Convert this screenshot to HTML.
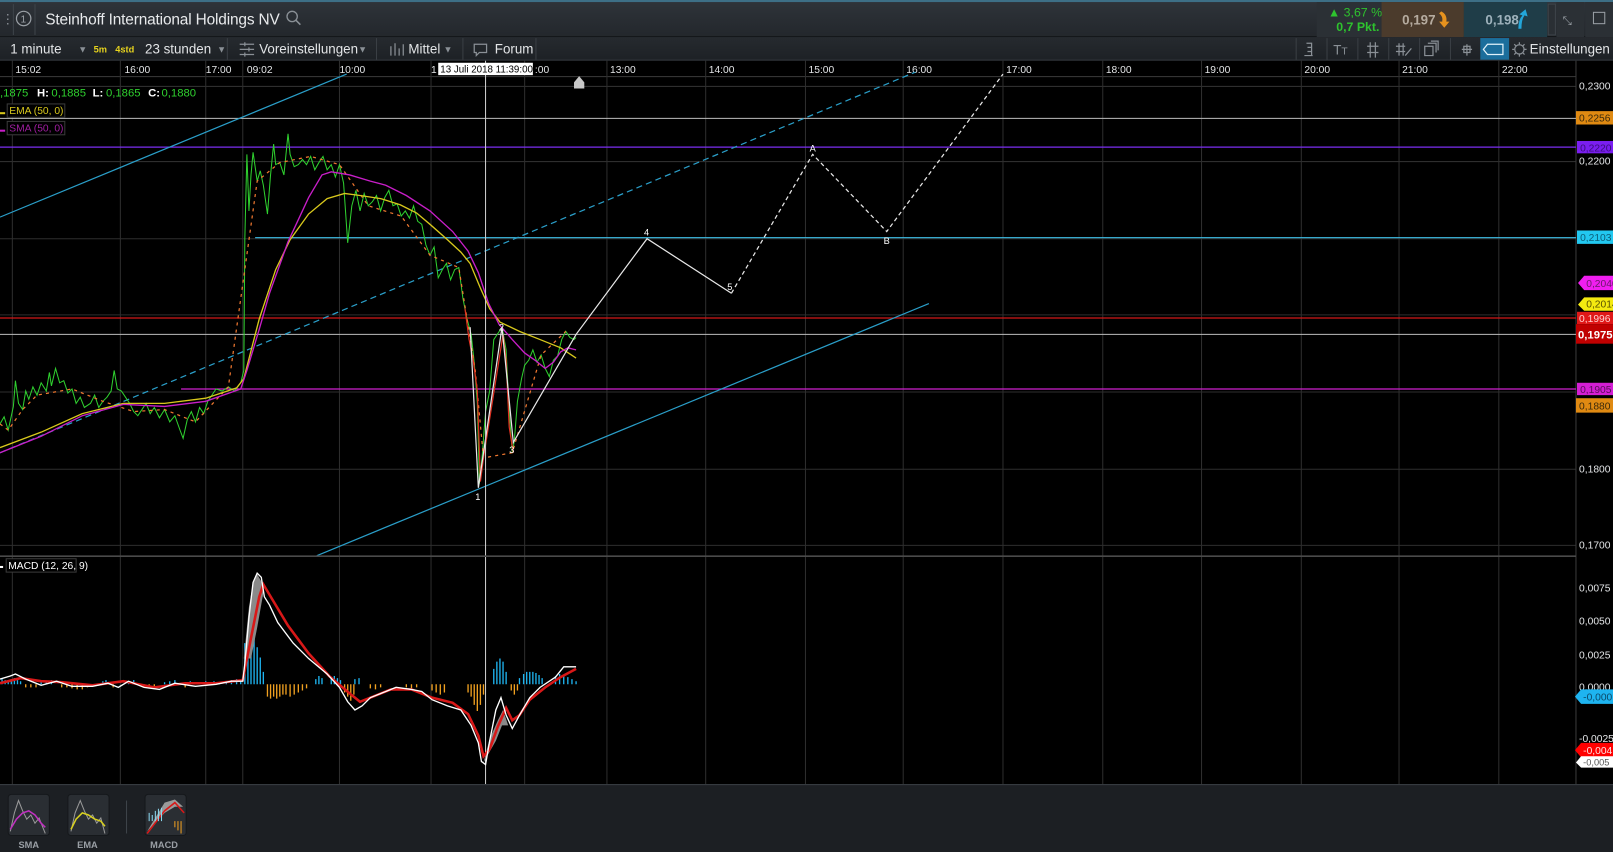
<!DOCTYPE html>
<html><head><meta charset="utf-8"><style>
html,body{margin:0;padding:0;background:#000;overflow:hidden}
svg{display:block}
text{font-family:"Liberation Sans",sans-serif}
</style></head><body>
<svg width="1613" height="852" viewBox="0 0 1568 828" preserveAspectRatio="none" xmlns="http://www.w3.org/2000/svg">
<defs>
<linearGradient id="tb" x1="0" y1="0" x2="0" y2="1"><stop offset="0" stop-color="#2f343a"/><stop offset="1" stop-color="#23272c"/></linearGradient>
<linearGradient id="tb2" x1="0" y1="0" x2="0" y2="1"><stop offset="0" stop-color="#262a2f"/><stop offset="1" stop-color="#1d2125"/></linearGradient>
</defs>
<rect width="1568" height="828" fill="#000"/>
<!-- top bar -->
<rect x="0" y="0" width="1568" height="36" fill="url(#tb)"/>
<rect x="0" y="0" width="1568" height="2" fill="#3d6f86"/>
<rect x="0" y="35" width="1568" height="1" fill="#14171a"/>
<text x="1" y="23" fill="#8a9096" font-size="13">⋮</text>
<line x1="13" y1="4" x2="13" y2="34" stroke="#3e444a"/>
<circle cx="23" cy="18" r="7" fill="none" stroke="#9aa0a6" stroke-width="1.2"/>
<text x="20" y="22" fill="#9aa0a6" font-size="10">1</text>
<line x1="34" y1="4" x2="34" y2="34" stroke="#3e444a"/>
<text x="44" y="24" fill="#e8eaec" font-size="15" textLength="228">Steinhoff International Holdings NV</text>
<circle cx="284" cy="16" r="5" fill="none" stroke="#8a9096" stroke-width="1.3"/><line x1="287.5" y1="19.5" x2="292" y2="24" stroke="#8a9096" stroke-width="1.5"/>
<rect x="1280" y="2" width="63" height="34" fill="#2b3035"/>
<text x="1291" y="16" fill="#2ec32e" font-size="12">▲ 3,67 %</text>
<text x="1299" y="30" fill="#2ec32e" font-size="12" font-weight="bold">0,7 Pkt.</text>
<rect x="1343" y="2" width="80" height="34" fill="#4b3b2c"/>
<text x="1363" y="24" fill="#b5ab9f" font-size="13" font-weight="bold">0,197</text>
<path d="M1401 11 q6 3 5 10 l3 0 l-5 6 l-5-6 l3 0 q1-5-3-8z" fill="#e6921e"/>
<rect x="1423" y="2" width="81" height="34" fill="#1f3d48"/>
<text x="1444" y="24" fill="#9db1bb" font-size="13" font-weight="bold">0,198</text>
<path d="M1476 28 q0-9 4-13 l-3-1 l6-5 l2 7 l-3-1 q-3 4-3 13z" fill="#23a6d9"/>
<rect x="1505" y="4" width="7" height="30" fill="#2a2f34" stroke="#3e444a"/>
<rect x="1513" y="2" width="27" height="34" fill="#2b3035"/>
<text x="1519" y="24" fill="#9aa0a6" font-size="11">⤡</text>
<rect x="1541" y="2" width="27" height="34" fill="#2b3035"/>
<rect x="1549" y="12" width="11" height="11" fill="none" stroke="#9aa0a6"/>
<!-- toolbar -->
<rect x="0" y="36" width="1568" height="23" fill="url(#tb2)"/>
<rect x="0" y="58" width="1568" height="1" fill="#3a3f44"/>
<g font-size="13" fill="#e3e5e7">
<text x="10" y="52">1 minute</text>
<text x="76" y="51" fill="#8a9096" font-size="9">▼</text>
<text x="91" y="51" fill="#e6d21e" font-size="9" font-weight="bold">5m</text>
<text x="112" y="51" fill="#e6d21e" font-size="9" font-weight="bold">4std</text>
<text x="141" y="52">23 stunden</text>
<text x="211" y="51" fill="#8a9096" font-size="9">▼</text>
<text x="252" y="52">Voreinstellungen</text>
<text x="348" y="51" fill="#8a9096" font-size="9">▼</text>
<text x="397" y="52">Mittel</text>
<text x="431" y="51" fill="#8a9096" font-size="9">▼</text>
<text x="481" y="52">Forum</text>
<text x="1487" y="52">Einstellungen</text>
</g>
<g stroke="#3a3f44"><line x1="221" y1="37" x2="221" y2="58"/><line x1="366" y1="37" x2="366" y2="58"/><line x1="450" y1="37" x2="450" y2="58"/><line x1="521" y1="37" x2="521" y2="58"/>
<line x1="1260" y1="37" x2="1260" y2="58"/><line x1="1290" y1="37" x2="1290" y2="58"/><line x1="1320" y1="37" x2="1320" y2="58"/><line x1="1350" y1="37" x2="1350" y2="58"/><line x1="1380" y1="37" x2="1380" y2="58"/><line x1="1410" y1="37" x2="1410" y2="58"/></g>
<g stroke="#8a9096" fill="none" stroke-width="1.2">
<path d="M233 43h14M233 48h14M233 53h14M238 41v4M242 46v4M238 51v4"/>
<path d="M380 45v9M384 42v12M388 47v7M392 43v11"/>
<path d="M461 43h12v8h-7l-3 3v-3h-2z"/>
<path d="M1270 42h5v12M1268 54h8M1271 46h4M1271 50h4"/>
<path d="M1332 41v15M1337 41v15M1329 45h11M1329 51h11"/>
<path d="M1360 42v12M1364 42v12M1357 45h9M1357 50h9M1366 54l6-7"/>
<path d="M1385 45h8v9h-8zM1388 42h8v9M1391 40h7v9"/>
<path d="M1421 48h10M1426 43v11"/><rect x="1423" y="45" width="6" height="6"/>
<circle cx="1477" cy="48" r="4.5"/><path d="M1477 41v2M1477 53v2M1470 48h2M1482 48h2M1472 43l1.5 1.5M1482 53l-1.5-1.5M1482 43l-1.5 1.5M1472 53l1.5-1.5"/>
</g>
<text x="1296" y="53" fill="#8a9096" font-size="13">T<tspan font-size="10">T</tspan></text>
<rect x="1439" y="37" width="28" height="21" fill="#1b6e9c"/>
<path d="M1446 43h15v10h-15l-4-5z" fill="none" stroke="#e0f2fa" stroke-width="1.2"/>
<!-- time axis -->
<rect x="0" y="59" width="1568" height="15" fill="#000"/>
<line x1="0" y1="74.5" x2="1532" y2="74.5" stroke="#3b3b3b"/>
<g stroke="#2e2e2e" stroke-width="1">
<line x1="12" y1="59" x2="12" y2="762"/><line x1="117" y1="59" x2="117" y2="762"/><line x1="200" y1="59" x2="200" y2="762"/><line x1="236" y1="59" x2="236" y2="762"/><line x1="330" y1="59" x2="330" y2="762"/><line x1="419" y1="59" x2="419" y2="762"/><line x1="510" y1="59" x2="510" y2="762"/><line x1="590" y1="59" x2="590" y2="762"/><line x1="686" y1="59" x2="686" y2="762"/><line x1="783" y1="59" x2="783" y2="762"/><line x1="878" y1="59" x2="878" y2="762"/><line x1="975" y1="59" x2="975" y2="762"/><line x1="1072" y1="59" x2="1072" y2="762"/><line x1="1168" y1="59" x2="1168" y2="762"/><line x1="1265" y1="59" x2="1265" y2="762"/><line x1="1360" y1="59" x2="1360" y2="762"/><line x1="1457" y1="59" x2="1457" y2="762"/>
<line x1="0" y1="84" x2="1532" y2="84"/><line x1="0" y1="157" x2="1532" y2="157"/><line x1="0" y1="232" x2="1532" y2="232"/><line x1="0" y1="306" x2="1532" y2="306"/><line x1="0" y1="381" x2="1532" y2="381"/><line x1="0" y1="456" x2="1532" y2="456"/><line x1="0" y1="530" x2="1532" y2="530"/>
</g>
<line x1="1532" y1="59" x2="1532" y2="762" stroke="#3a3a3a"/>
<g fill="#e3e5e7" font-size="10">
<text x="15" y="71">15:02</text><text x="121" y="71">16:00</text><text x="200" y="71">17:00</text><text x="240" y="71">09:02</text><text x="330" y="71">10:00</text><text x="419" y="71">1</text><text x="520" y="71">:00</text><text x="593" y="71">13:00</text><text x="689" y="71">14:00</text><text x="786" y="71">15:00</text><text x="881" y="71">16:00</text><text x="978" y="71">17:00</text><text x="1075" y="71">18:00</text><text x="1171" y="71">19:00</text><text x="1268" y="71">20:00</text><text x="1363" y="71">21:00</text><text x="1460" y="71">22:00</text>
</g>
<!-- price axis labels -->
<g fill="#e3e5e7" font-size="10">
<text x="1535" y="87">0,2300</text><text x="1535" y="160">0,2200</text><text x="1535" y="459">0,1800</text><text x="1535" y="533">0,1700</text>
</g>
<rect x="1532" y="108" width="36" height="13" fill="#e08a12"/><text x="1535" y="118" fill="#3a2a0c" font-size="10">0,2256</text>
<rect x="1533" y="137" width="35" height="12" fill="#7a1ef0"/><text x="1536" y="147" fill="#3a0d7a" font-size="10">0,2220</text>
<rect x="1533" y="224" width="35" height="13" fill="#22c8f0"/><text x="1536" y="234" fill="#0c5f7a" font-size="10">0,2103</text>
<path d="M1540 268h28v14h-28l-6-7z" fill="#f01ef0"/><text x="1542" y="279" fill="#6a1a6a" font-size="10">0,2040</text>
<path d="M1540 289h28v13h-28l-6-6z" fill="#f4ea10"/><text x="1542" y="299" fill="#5a5200" font-size="10">0,2014</text>
<rect x="1533" y="303" width="35" height="12" fill="#e01818"/><text x="1535" y="313" fill="#ffd0d0" font-size="10">0,1996</text>
<rect x="1532" y="315" width="36" height="19" fill="#c00000"/><text x="1534" y="329" fill="#fff" font-size="11" font-weight="bold">0,1975</text>
<rect x="1533" y="372" width="35" height="12" fill="#d41ed4"/><text x="1536" y="382" fill="#5a0d5a" font-size="10">0,1905</text>
<rect x="1532" y="387" width="36" height="14" fill="#e08a12"/><text x="1535" y="398" fill="#3a2a0c" font-size="10">0,1880</text>
<!-- horizontal level lines -->
<line x1="0" y1="115" x2="1532" y2="115" stroke="#bdbdbd"/>
<line x1="0" y1="143" x2="1532" y2="143" stroke="#7a2ef0" stroke-width="1.2"/>
<line x1="248" y1="231" x2="1532" y2="231" stroke="#3ec0e8"/>
<line x1="0" y1="309" x2="1532" y2="309" stroke="#d01818" stroke-width="1.2"/>
<line x1="0" y1="325" x2="1532" y2="325" stroke="#bdbdbd"/>
<line x1="176" y1="378" x2="1532" y2="378" stroke="#d020d0" stroke-width="1.2"/>
<!-- trend lines -->
<line x1="0" y1="211" x2="337" y2="72" stroke="#2a9ec8" stroke-width="1.2"/>
<line x1="0" y1="440" x2="890" y2="70" stroke="#2a9ec8" stroke-width="1.2" stroke-dasharray="6,4"/>
<line x1="308" y1="540" x2="903" y2="295" stroke="#2a9ec8" stroke-width="1.2"/>
<!-- price bars -->
<polyline fill="none" stroke="#2fd02f" stroke-width="1" points="0,412 4,405 8,418 13,395 15,370 18,392 22,398 25,380 28,388 32,376 36,384 40,372 45,380 48,362 50,375 54,358 58,372 62,370 66,382 70,378 74,392 78,386 82,396 88,392 92,384 96,396 100,390 104,386 108,380 111,360 114,378 118,380 122,386 126,392 130,400 134,404 138,398 142,392 146,402 150,396 155,406 160,398 165,410 170,404 175,418 178,426 182,408 186,400 190,410 194,396 198,402 202,390 206,384 210,378 216,380 222,376 228,380 234,372 237,360 238,232 240,150 242,205 244,170 246,148 250,176 253,166 256,180 260,208 263,170 266,140 268,160 272,158 276,170 280,130 282,150 286,162 290,160 294,155 298,160 302,152 306,165 310,158 314,152 318,165 322,160 326,172 330,160 334,178 338,236 342,200 346,185 350,205 354,188 358,200 362,196 366,190 370,205 374,192 378,185 382,200 386,198 390,210 394,205 398,212 402,200 406,215 410,218 414,238 418,248 422,240 426,270 430,262 434,256 438,272 442,262 446,260 450,290 454,310 458,325 461,352 464,392 466,470 469,440 472,400 476,380 480,330 484,324 488,318 492,340 495,400 498,440 500,428 503,390 507,368 510,355 514,350 518,340 522,352 526,345 530,358 534,366 538,350 542,346 546,330 550,322 554,328 558,330 560,328"/>
<polyline fill="none" stroke="#f07830" stroke-width="1.2" stroke-dasharray="3,4" points="0,412 8,418 22,398 36,384 70,378 100,390 130,400 160,398 190,410 222,376 250,176 272,158 302,152 330,160 358,200 390,210 418,248 446,260 462,360 470,445 498,440 526,345 550,322"/>
<polyline fill="none" stroke="#e03020" stroke-width="1.2" points="452,300 456,330 460,350 464,380 467,468 470,445 489,325 492,350 495,415 499,440"/>
<!-- EMA / SMA -->
<polyline fill="none" stroke="#d8c81c" stroke-width="1.3" points="0,435 40,420 80,402 120,392 160,392 200,387 230,377 237,368 252,310 268,262 282,233 300,208 318,193 335,188 350,190 370,193 389,199 405,207 418,218 435,233 448,245 457,256 467,280 476,300 486,313 505,322 525,330 545,338 560,348"/>
<polyline fill="none" stroke="#c81ec8" stroke-width="1.3" points="0,440 40,424 80,404 120,393 160,395 200,390 234,378 240,360 252,320 262,285 280,235 300,192 313,170 322,167 340,170 360,176 375,180 395,190 418,205 440,225 455,244 465,265 475,295 485,315 498,330 510,343 520,350 530,358 538,352 545,342 552,338 560,340"/>
<!-- wave lines -->
<polyline fill="none" stroke="#e8e8e8" stroke-width="1.2" points="457,318 465,474 488,318 499,430 560,325 629,232 711,285"/>
<polyline fill="none" stroke="#e8e8e8" stroke-width="1.2" stroke-dasharray="4,3" points="711,285 790,150 862,225 975,72"/>
<g fill="#fff" font-size="9">
<text x="462" y="486">1</text><text x="485" y="321">2</text><text x="495" y="440">3</text><text x="626" y="229">4</text><text x="707" y="282">5</text><text x="787" y="147">A</text><text x="859" y="237">B</text>
</g>
<!-- legend -->
<g font-size="11">
<text x="0" y="94" fill="#2fd02f">,1875</text><text x="36" y="94" fill="#fff" font-weight="bold">H:</text><text x="50" y="94" fill="#2fd02f">0,1885</text>
<text x="90" y="94" fill="#fff" font-weight="bold">L:</text><text x="103" y="94" fill="#2fd02f">0,1865</text>
<text x="144" y="94" fill="#fff" font-weight="bold">C:</text><text x="157" y="94" fill="#2fd02f">0,1880</text>
</g>
<rect x="0" y="109" width="5" height="2" fill="#d8c81c"/>
<rect x="7" y="101" width="56" height="13" fill="#000" stroke="#3a3a3a"/><text x="9" y="111" fill="#d8c81c" font-size="10">EMA (50, 0)</text>
<rect x="0" y="126" width="5" height="2" fill="#c81ec8"/>
<rect x="7" y="118" width="56" height="13" fill="#000" stroke="#3a3a3a"/><text x="9" y="128" fill="#a01ea0" font-size="10">SMA (50, 0)</text>
<!-- crosshair -->
<line x1="472" y1="59" x2="472" y2="762" stroke="#cfcfcf"/>
<rect x="426" y="61" width="92" height="12" fill="#fff"/><text x="428" y="70.5" fill="#000" font-size="9.5">13 Juli 2018 11:39:00</text>
<path d="M558 80l5-6 5 6v6h-10z" fill="#c8c8c8"/>
<!-- pane separator -->
<line x1="0" y1="540.5" x2="1532" y2="540.5" stroke="#4a4a4a" stroke-width="1.5"/>
<!-- MACD axis -->
<g fill="#e3e5e7" font-size="10">
<text x="1535" y="575">0,0075</text><text x="1535" y="607">0,0050</text><text x="1535" y="640">0,0025</text><text x="1535" y="671">0,0000</text><text x="1535" y="721">-0,0025</text>
</g>
<path d="M1537 670h31v14h-31l-6-7z" fill="#1eb4f0"/><text x="1539" y="681" fill="#0c4a6a" font-size="10">-0,000</text>
<path d="M1537 722h31v14h-31l-6-7z" fill="#f00"/><text x="1539" y="733" fill="#ffe0e0" font-size="10">-0,004</text>
<path d="M1537 735h31v11h-31l-5-5z" fill="#fff"/><text x="1539" y="744" fill="#555" font-size="9">-0,005</text>
<rect x="0" y="550" width="3" height="2" fill="#fff"/>
<rect x="6" y="543" width="68" height="13" fill="#000" stroke="#3a3a3a"/><text x="8" y="553" fill="#fff" font-size="10">MACD (12, 26, 9)</text>
<!-- histogram -->
<g stroke="#1eb4f0" stroke-width="1.3">
<path d="M2 665v-5M5 665v-4M8 665v-4M11 665v-5M14 665v-6M17 665v-4M20 665v-3M40 665v-2M45 665v-3M50 665v-4M100 665v-3M103 665v-4M125 665v-3M130 665v-4M160 665v-2M165 665v-3M170 665v-4M185 665v-3M190 665v-2M200 665v-3M208 665v-3M213 665v-2M220 665v-3M225 665v-4M230 665v-5M234 665v-4M238 665v-40M241 665v-50M244 665v-58M247 665v-48M250 665v-36M253 665v-26M256 665v-12M307 665v-5M310 665v-8M313 665v-6M322 665v-6M325 665v-8M328 665v-6M331 665v-4M345 665v-5M349 665v-6M480 665v-15M483 665v-22M486 665v-25M489 665v-22M492 665v-12M505 665v-6M509 665v-10M512 665v-12M515 665v-12M518 665v-12M521 665v-11M524 665v-9M527 665v-6M540 665v-8M544 665v-10M548 665v-9M552 665v-7M556 665v-5M560 665v-3"/>
</g>
<g stroke="#f0a020" stroke-width="1.3">
<path d="M25 665v3M30 665v3M35 665v3M60 665v3M65 665v3M70 665v4M75 665v5M80 665v5M85 665v3M110 665v3M140 665v3M145 665v3M150 665v4M180 665v3M260 665v12M263 665v14M266 665v12M269 665v14M272 665v12M275 665v10M278 665v10M282 665v12M286 665v10M290 665v8M294 665v6M298 665v4M335 665v8M338 665v12M341 665v16M344 665v10M360 665v4M365 665v5M370 665v3M395 665v3M400 665v4M405 665v3M420 665v6M424 665v8M428 665v10M432 665v8M455 665v8M458 665v12M461 665v20M464 665v26M467 665v20M470 665v10M497 665v6M500 665v10M503 665v6"/>
</g>
<!-- MACD lines -->
<path d="M237 640 L242 590 L246 566 L250 558 L254 565 L256 576 L250 610 L244 640z" fill="#8a8a8a"/>
<path d="M470 741 L476 718 L484 700 L489 690 L494 705 L488 705 L482 720z" fill="#8a8a8a"/>
<polyline fill="none" stroke="#d81818" stroke-width="2.5" points="0,664 20,659 40,662 60,663 90,666 120,662 150,668 180,664 210,664 236,661 244,620 252,580 256,568 262,578 280,608 300,635 320,657 340,674 350,682 360,678 380,670 400,670 420,678 440,683 455,694 465,715 470,735 476,728 484,706 492,688 498,700 505,695 515,680 530,668 545,658 560,650"/>
<polyline fill="none" stroke="#fff" stroke-width="1.3" points="0,660 10,657 15,655 25,660 40,666 55,662 70,667 90,667 105,664 115,668 125,662 140,668 155,670 170,664 190,667 210,665 225,662 236,662 238,645 242,600 246,566 250,557 254,561 257,580 262,588 270,605 285,625 300,640 318,655 330,668 338,682 345,690 352,686 360,678 375,672 385,668 400,670 410,672 420,680 435,686 448,690 458,705 465,722 468,740 472,743 476,720 482,690 487,678 492,695 498,708 505,695 515,678 525,668 540,658 548,648 560,648"/>
<!-- bottom bar -->
<rect x="0" y="762" width="1568" height="66" fill="#1c1f23"/>
<line x1="0" y1="762.5" x2="1568" y2="762.5" stroke="#3a3f44"/>
<g>
<rect x="8" y="772" width="40" height="40" rx="3" fill="#2a2e33" stroke="#15181b"/>
<polyline fill="none" stroke="#9a9a9a" points="10,808 14,790 18,778 22,788 26,796 30,792 34,800 38,795 44,810"/>
<polyline fill="none" stroke="#c030c0" stroke-width="1.5" points="10,806 16,796 22,790 28,788 34,792 40,800 44,804"/>
<text x="18" y="824" fill="#9a9fa5" font-size="9" font-weight="bold">SMA</text>
<rect x="66" y="772" width="40" height="40" rx="3" fill="#2a2e33" stroke="#15181b"/>
<polyline fill="none" stroke="#9a9a9a" points="69,808 73,790 78,778 82,788 86,796 90,792 94,800 98,795 102,810"/>
<polyline fill="none" stroke="#d8d020" stroke-width="1.5" points="69,806 74,796 80,790 86,792 92,796 98,798 102,803"/>
<text x="75" y="824" fill="#9a9fa5" font-size="9" font-weight="bold">EMA</text>
<line x1="123" y1="778" x2="123" y2="810" stroke="#3e444a"/>
<rect x="141" y="772" width="40" height="40" rx="3" fill="#2a2e33" stroke="#15181b"/>
<path d="M143 808 L160 780 L170 777 L178 784 L170 784 L160 790z" fill="#9a9a9a"/>
<polyline fill="none" stroke="#d81818" stroke-width="1.5" points="143,810 160,788 170,780 179,790"/>
<path d="M145 790v8M148 792v6M151 788v10M154 786v12M157 785v13" stroke="#8ad8f0"/>
<path d="M170 798v6M173 798v9M176 798v12" stroke="#f0a020"/>
<text x="146" y="824" fill="#9a9fa5" font-size="9" font-weight="bold">MACD</text>
</g>
</svg>
</body></html>
